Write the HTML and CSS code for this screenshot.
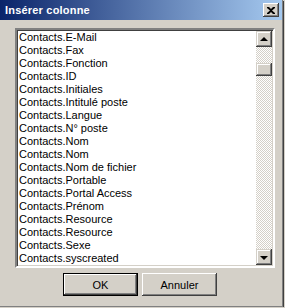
FILE: index.html
```html
<!DOCTYPE html>
<html>
<head>
<meta charset="utf-8">
<link rel="stylesheet" href="styles.css">
</head>
<body>
<div class="window">
  <div class="titlebar">
    <span class="title">Insérer colonne</span>
    <div class="close">
      <svg width="8" height="7" viewBox="0 0 8 7"><path d="M0 0h2l2 2 2-2h2v1L5 3.5 8 6v1H6L4 5 2 7H0V6l3-2.5L0 1z" fill="#000"/></svg>
    </div>
  </div>
  <div class="body">
    <div class="listbox">
      <ul class="items">
        <li>Contacts.E-Mail</li>
        <li>Contacts.Fax</li>
        <li>Contacts.Fonction</li>
        <li>Contacts.ID</li>
        <li>Contacts.Initiales</li>
        <li>Contacts.Intitulé poste</li>
        <li>Contacts.Langue</li>
        <li>Contacts.N° poste</li>
        <li>Contacts.Nom</li>
        <li>Contacts.Nom</li>
        <li>Contacts.Nom de fichier</li>
        <li>Contacts.Portable</li>
        <li>Contacts.Portal Access</li>
        <li>Contacts.Prénom</li>
        <li>Contacts.Resource</li>
        <li>Contacts.Resource</li>
        <li>Contacts.Sexe</li>
        <li>Contacts.syscreated</li>
        <li>Contacts.sysmodified</li>
      </ul>
      <div class="scrollbar">
        <div class="sbtn"><span class="arrow up"></span></div>
        <div class="track"><div class="thumb"></div></div>
        <div class="sbtn"><span class="arrow down"></span></div>
      </div>
    </div>
    <div class="buttons">
      <div class="btn default">OK</div>
      <div class="btn">Annuler</div>
    </div>
  </div>
</div>
</body>
</html>
```
FILE: styles.css
```css
html, body {
  margin: 0;
  padding: 0;
  background: #d4d0c8;
}
.window {
  width: 282px;
  height: 306px;
  background: #d4d0c8;
  border-right: 1px solid #808080;
  border-bottom: 1px solid #808080;
  box-shadow: 1px 1px 0 #404040;
  font-family: "Liberation Sans", Arial, sans-serif;
  font-size: 11px;
  color: #000;
  display: flex;
  flex-direction: column;
}
.titlebar {
  height: 20px;
  background: linear-gradient(to right, #0a246a, #a6caf0);
  display: flex;
  align-items: center;
  justify-content: space-between;
  padding: 0 3px 0 5px;
}
.title {
  color: #fff;
  font-weight: bold;
  font-size: 11px;
  letter-spacing: 0.2px;
}
.close {
  width: 16px;
  height: 14px;
  background: #d4d0c8;
  box-shadow: inset -1px -1px #404040, inset 1px 1px #fff, inset -2px -2px #808080;
  display: flex;
  align-items: center;
  justify-content: center;
}
.body {
  padding: 8px 0 0 15px;
  display: flex;
  flex-direction: column;
}
.listbox {
  width: 256px;
  height: 236px;
  border: 2px solid;
  border-color: #808080 #fff #fff #808080;
  box-shadow: inset 1px 1px #404040, inset -1px -1px #d4d0c8;
  background: #fff;
  display: flex;
  overflow: hidden;
}
.items {
  list-style: none;
  margin: 0;
  padding: 1px 0 0 2px;
  flex: 1;
  overflow: hidden;
  line-height: 13px;
  white-space: nowrap;
}
.scrollbar {
  width: 16px;
  margin: 1px 1px 1px 0;
  display: flex;
  flex-direction: column;
}
.sbtn {
  height: 16px;
  flex: none;
  background: #d4d0c8;
  box-shadow: inset -1px -1px #404040, inset 1px 1px #d4d0c8, inset -2px -2px #808080, inset 2px 2px #fff;
  display: flex;
  align-items: center;
  justify-content: center;
}
.arrow {
  width: 0;
  height: 0;
  border-left: 4px solid transparent;
  border-right: 4px solid transparent;
}
.arrow.up { border-bottom: 4px solid #000; margin-top: -1px; }
.arrow.down { border-top: 4px solid #000; margin-top: 1px; }
.track {
  flex: 1;
  background-color: #fff;
  background-image: repeating-conic-gradient(#d4d0c8 0 25%, #fff 0 50%);
  background-size: 2px 2px;
  padding-top: 16px;
}
.thumb {
  height: 13px;
  background: #d4d0c8;
  box-shadow: inset -1px -1px #404040, inset 1px 1px #d4d0c8, inset -2px -2px #808080, inset 2px 2px #fff;
}
.buttons {
  display: flex;
  gap: 4px;
  margin: 5px 0 0 48px;
}
.btn {
  width: 75px;
  height: 23px;
  box-sizing: border-box;
  background: #d4d0c8;
  box-shadow: inset -1px -1px #404040, inset 1px 1px #fff, inset -2px -2px #808080, inset 2px 2px #d4d0c8;
  display: flex;
  align-items: center;
  justify-content: center;
}
.btn.default {
  border: 1px solid #000;
  box-shadow: inset -1px -1px #404040, inset 1px 1px #fff, inset -2px -2px #808080;
}
```
